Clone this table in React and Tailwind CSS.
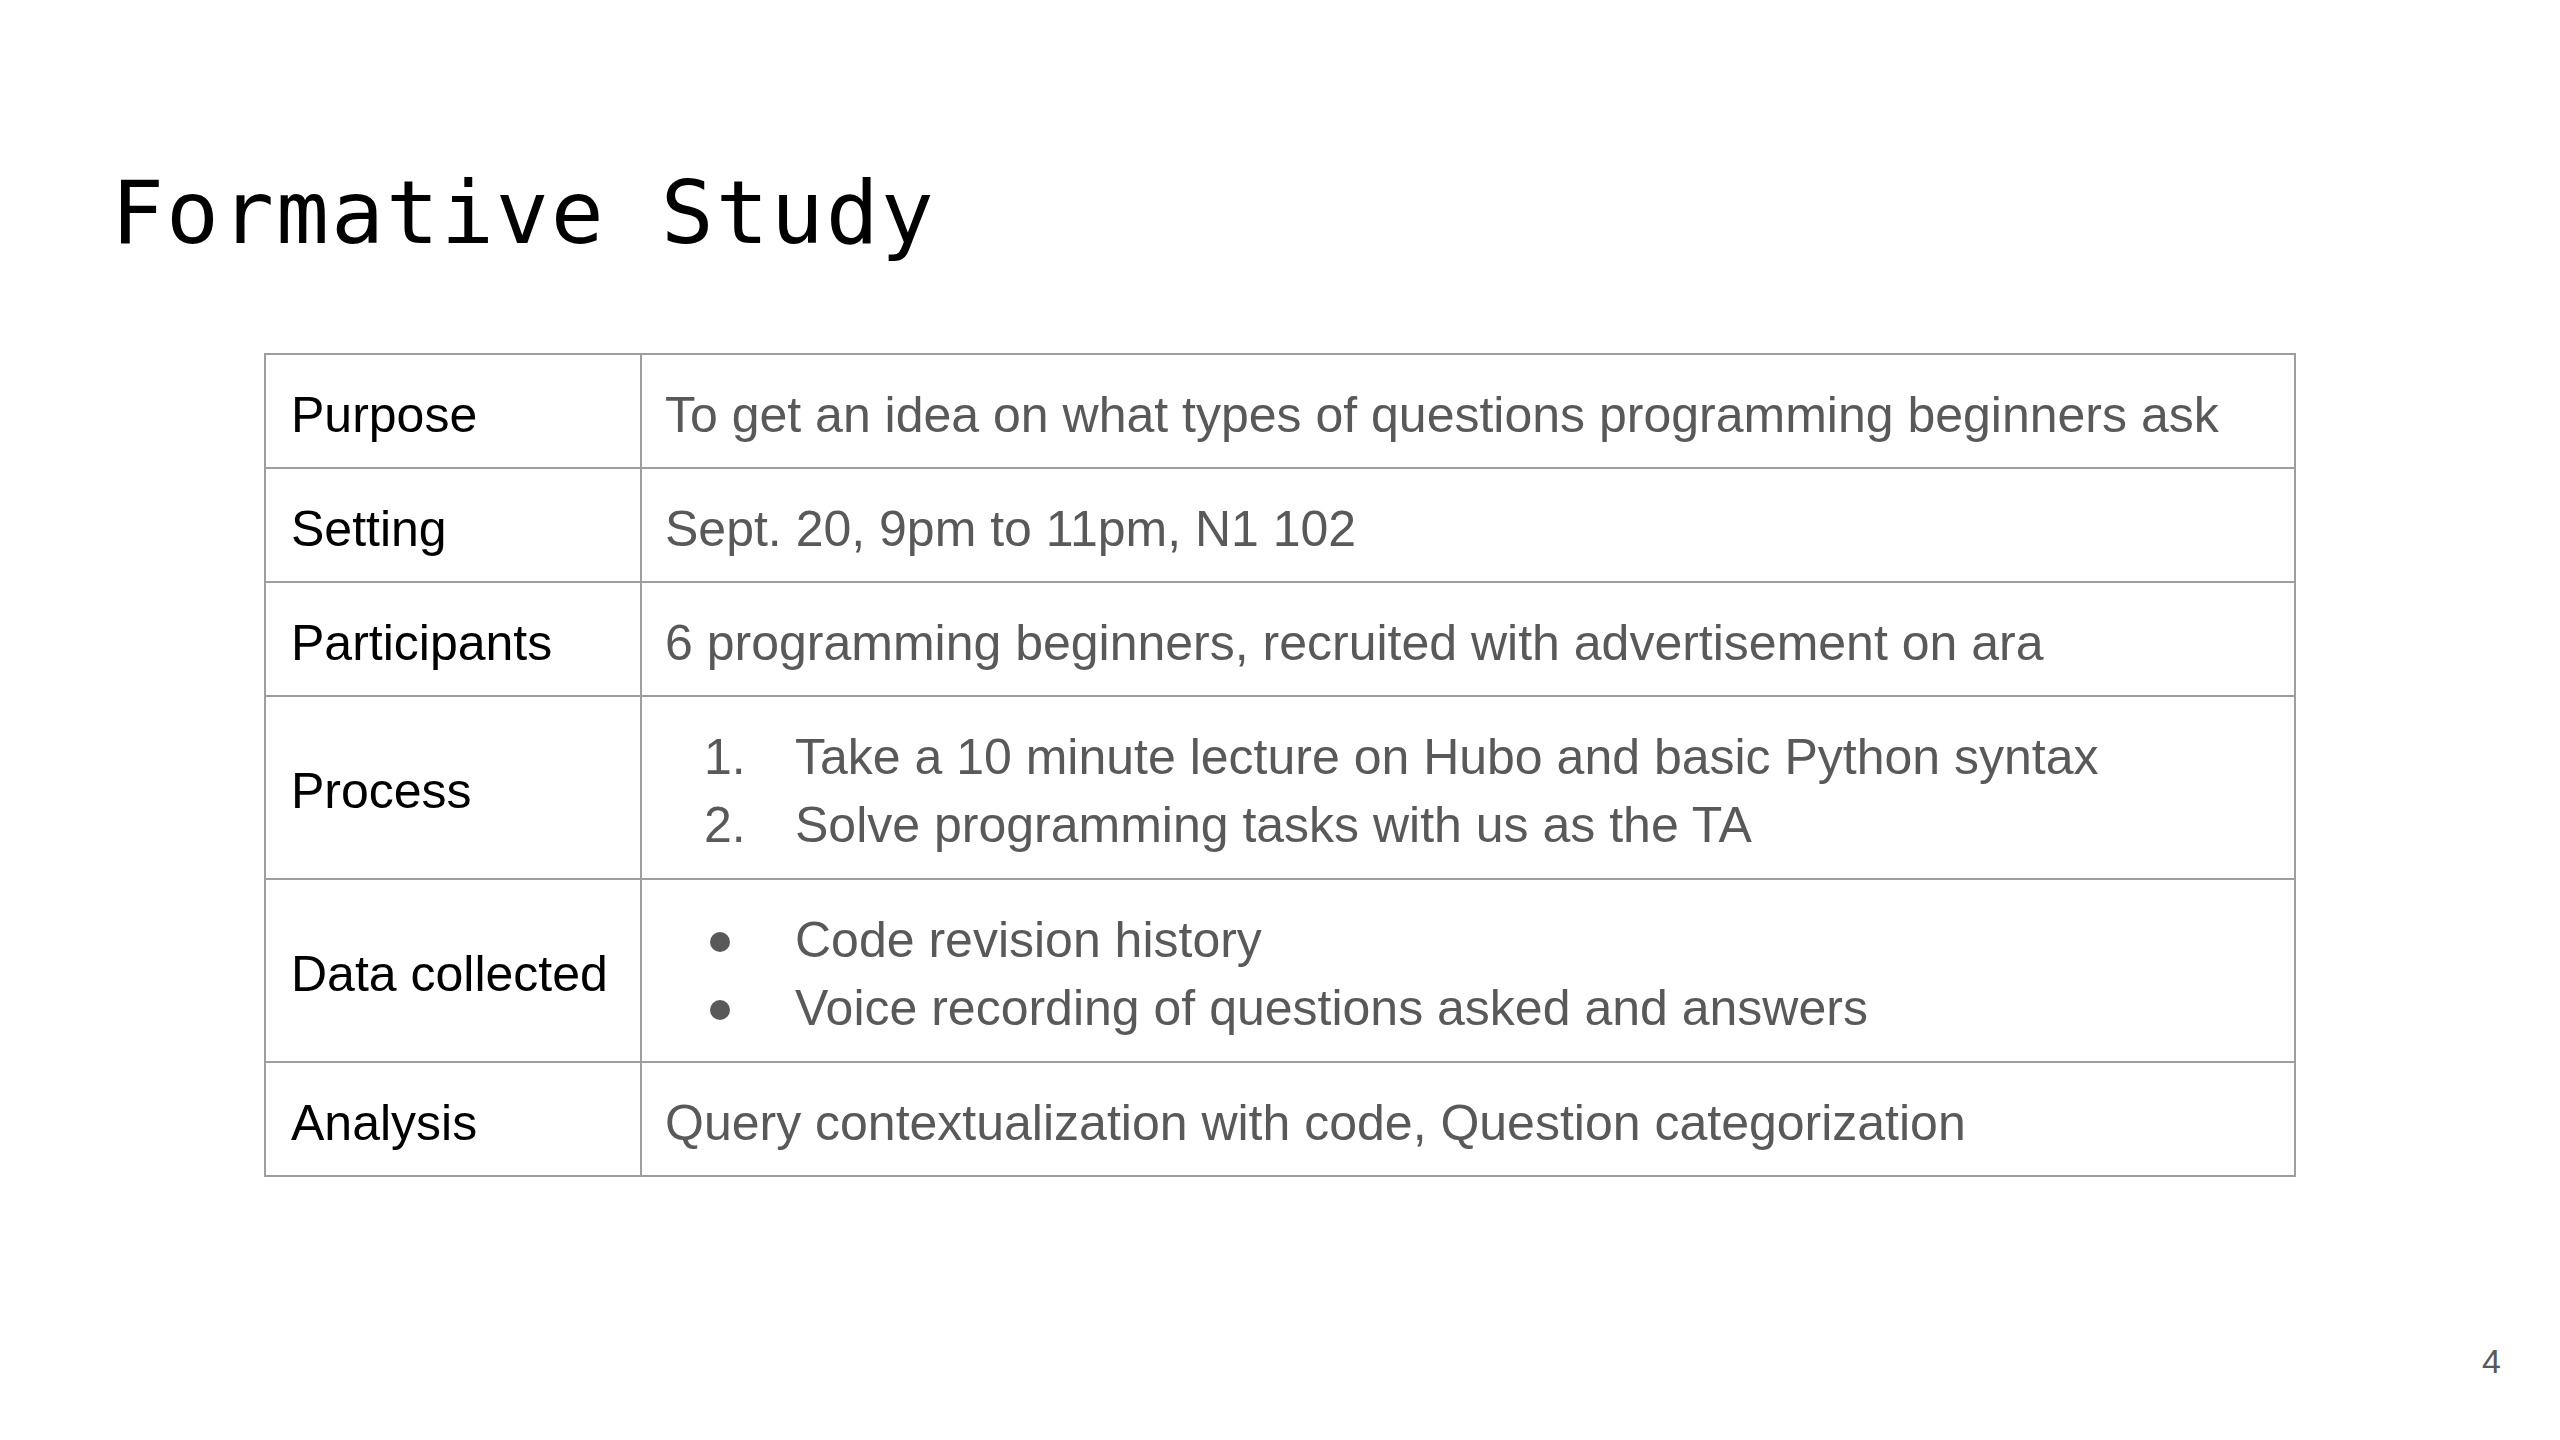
import React from "react";

const rows = [
  { label: "Purpose", h: "h-[112px]", text: "To get an idea on what types of questions programming beginners ask" },
  { label: "Setting", h: "h-[114px]", text: "Sept. 20, 9pm to 11pm, N1 102" },
  { label: "Participants", h: "h-[114px]", text: "6 programming beginners, recruited with advertisement on ara" },
  {
    label: "Process",
    h: "h-[183px]",
    ordered: ["Take a 10 minute lecture on Hubo and basic Python syntax", "Solve programming tasks with us as the TA"],
  },
  {
    label: "Data collected",
    h: "h-[183px]",
    bullets: ["Code revision history", "Voice recording of questions asked and answers"],
  },
  { label: "Analysis", h: "h-[114px]", text: "Query contextualization with code, Question categorization" },
];

export default function App() {
  return (
    <div
      className="w-[2560px] h-[1440px] bg-white flex flex-col overflow-hidden"
      style={{ fontFamily: '"Liberation Sans", Arial, sans-serif' }}
    >
      <h1
        className="ml-[111px] mt-[169px] text-[88px] leading-none tracking-[2px] text-black font-normal whitespace-pre"
        style={{ fontFamily: '"DejaVu Sans Mono", monospace' }}
      >
        Formative Study
      </h1>

      <div className="ml-[264px] mt-[96px] w-[2032px] border-2 border-[#9e9e9e] flex flex-col">
        {rows.map((r, i) => (
          <div key={r.label} className={`flex ${r.h} ${i > 0 ? "border-t-2 border-[#9e9e9e]" : ""}`}>
            <div className="w-[376px] shrink-0 border-r-2 border-[#9e9e9e] flex items-center pl-[25px] pt-[7px] text-[50px] leading-[68px] text-black">
              {r.label}
            </div>
            <div className="flex-1 flex items-center pl-[23px] pt-[7px] text-[50px] leading-[68px] text-[#595959]">
              {r.text && <span>{r.text}</span>}
              {r.ordered && (
                <div className="ml-[39px] flex flex-col">
                  {r.ordered.map((t, k) => (
                    <div key={t} className="flex">
                      <span className="w-[91px] shrink-0">{k + 1}.</span>
                      <span>{t}</span>
                    </div>
                  ))}
                </div>
              )}
              {r.bullets && (
                <div className="ml-[39px] flex flex-col">
                  {r.bullets.map((t) => (
                    <div key={t} className="flex">
                      <span className="w-[91px] h-[68px] shrink-0 flex items-center">
                        <span className="ml-[6px] mt-[3px] w-[20px] h-[20px] rounded-full bg-[#595959]" />
                      </span>
                      <span>{t}</span>
                    </div>
                  ))}
                </div>
              )}
            </div>
          </div>
        ))}
      </div>

      <div className="mt-auto flex justify-end pr-[59px] pb-[62px]">
        <span className="text-[34px] leading-none text-[#595959]">4</span>
      </div>
    </div>
  );
}
